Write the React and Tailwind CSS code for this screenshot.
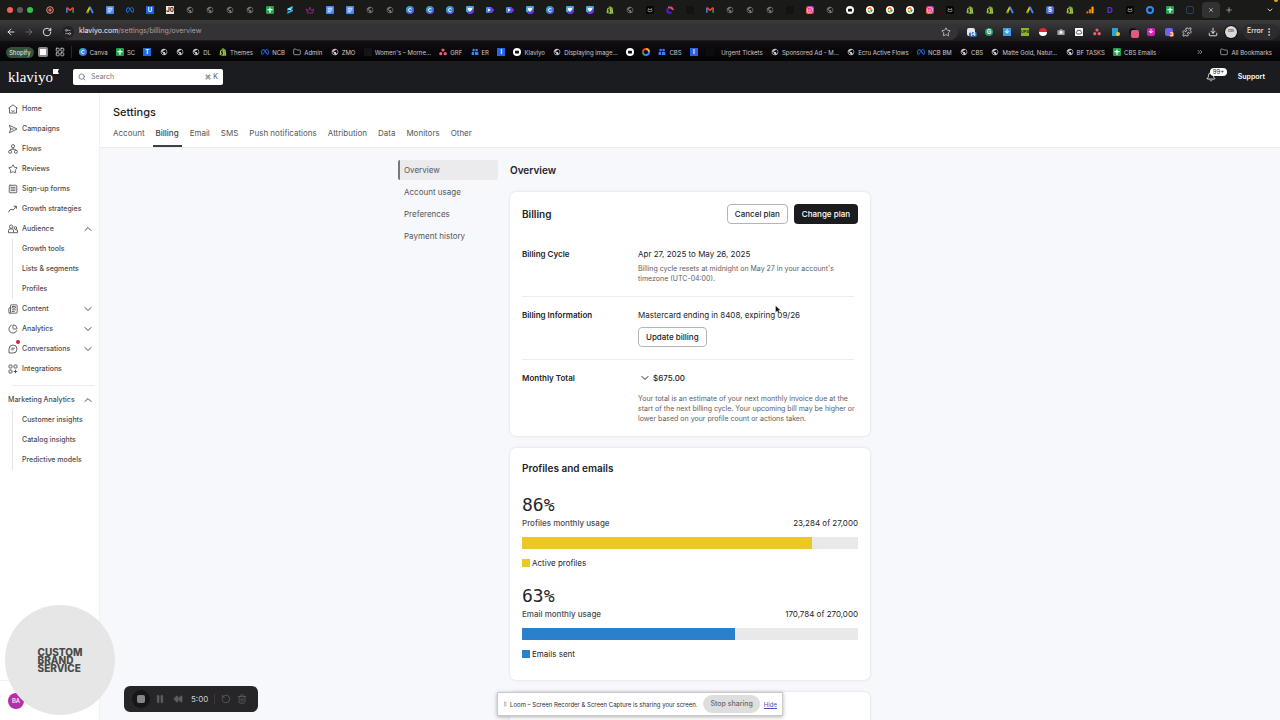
import {
  ArrowLeft,
  ArrowRight,
  Bell,
  ChartPie,
  ChevronDown,
  ChevronsRight,
  ChevronUp,
  Command,
  Download,
  EllipsisVertical,
  Folder,
  GripVertical,
  LayoutGrid,
  Newspaper,
  Pause,
  Plus,
  Puzzle,
  Rewind,
  RotateCw,
  Search,
  Settings2,
  SquareMenu,
  Star,
  Trash2,
  X,
} from "lucide-react"
import { FaInstagram, FaMeta, FaShopify } from "react-icons/fa6"
import { FcGoogle } from "react-icons/fc"
import { MdPublic } from "react-icons/md"

const Tile = ({ className, children }) => (
  <span className={`flex size-2 items-center justify-center text-[6px] leading-none font-bold text-white ${className}`}>
    {children}
  </span>
)

const Sheet = () => (
  <svg viewBox="0 0 8 8" className="size-2">
    <rect width="8" height="8" rx="1" fill="#1fa34a" />
    <path d="M4 1.4v5.4M1.4 3.6h5.2" stroke="#fff" strokeWidth="1.3" />
  </svg>
)

const Doc = () => (
  <svg viewBox="0 0 8 8" className="size-2">
    <rect width="8" height="8" rx="0.8" fill="#4a86f0" />
    <path d="M1.6 2.2h4.8M1.6 4h4.8M1.6 5.8h3.2" stroke="#fff" strokeWidth="0.9" />
  </svg>
)

const Gmail = () => (
  <svg viewBox="0 0 8 8" className="size-2">
    <path d="M0.9 6.8V1.8" stroke="#4285f4" strokeWidth="1.5" />
    <path d="M7.1 6.8V1.8" stroke="#34a853" strokeWidth="1.5" />
    <path d="M0.8 1.6L4 4.2l3.2-2.6" stroke="#ea4335" strokeWidth="1.6" fill="none" />
  </svg>
)

const Ads = () => (
  <svg viewBox="0 0 8 8" className="size-2" strokeLinecap="round" strokeWidth="2">
    <path d="M3.6 1.6L1.4 6" stroke="#fbbc04" />
    <path d="M4.2 1.6L6.6 6.4" stroke="#4285f4" />
    <circle cx="1.5" cy="6.4" r="1.1" fill="#34a853" />
  </svg>
)

const Canva = () => (
  <svg viewBox="0 0 8 8" className="size-2">
    <defs>
      <linearGradient id="canva" x1="0" y1="0" x2="1" y2="1">
        <stop offset="0" stopColor="#19c8d2" />
        <stop offset="1" stopColor="#6a3be8" />
      </linearGradient>
    </defs>
    <circle cx="4" cy="4" r="4" fill="url(#canva)" />
    <path d="M5.5 3a1.7 1.7 0 1 0 0 2.2" fill="none" stroke="#fff" strokeWidth="0.9" />
  </svg>
)

const Heart = () => (
  <svg viewBox="0 0 8 8" className="size-2">
    <path d="M0 1.2Q0 0 1.2 0h5.6Q8 0 8 1.2v4L5.6 8H3L0 5.4z" fill="#3fa9ea" />
    <path d="M8 2.4v3L5.6 8H3L1.4 6.6z" fill="#6a2fe0" />
    <path d="M4 6L1.9 3.7a1.2 1.2 0 0 1 2.1-1.3 1.2 1.2 0 0 1 2.1 1.3z" fill="#fff" />
  </svg>
)

const Play = () => (
  <svg viewBox="0 0 8 8" className="size-2">
    <path d="M0 1.8Q0 1 1 1h4l3 3-2.4 3H1Q0 7 0 6z" fill="#3c8be8" />
    <path d="M5 1l3 3-2.4 3H3z" fill="#6d35e6" />
    <path d="M2 2.4v3.2L5 4z" fill="#fff" />
  </svg>
)

const People = () => (
  <svg viewBox="0 0 8 8" className="size-2" fill="#3b82f6">
    <circle cx="2.6" cy="2" r="1.3" />
    <circle cx="5.6" cy="2" r="1.3" />
    <path d="M0.6 7V5q0-1.2 1.2-1.2h1.4V7zM4 7V3.8h2.2q1.2 0 1.2 1.2v2z" />
  </svg>
)

const Dots = () => (
  <svg viewBox="0 0 8 8" className="size-2" fill="#f0626b">
    <circle cx="4" cy="2" r="1.6" />
    <circle cx="1.8" cy="5.7" r="1.6" />
    <circle cx="6.2" cy="5.7" r="1.6" />
  </svg>
)

const Badge = () => (
  <svg viewBox="0 0 8 8" className="size-2">
    <circle cx="4" cy="4" r="4" fill="#fff" />
    <rect x="2" y="2.8" width="4" height="2.6" rx="0.5" fill="#111" />
  </svg>
)

const Owl = () => (
  <svg viewBox="0 0 8 8" className="size-2">
    <rect width="8" height="8" rx="1.5" fill="#050505" />
    <path d="M1.8 2.4l1.4 0.8M6.2 2.4l-1.4 0.8" stroke="#d8d8d8" strokeWidth="0.6" />
    <path d="M4 4a1.1 1.1 0 1 0 0 1 1.1 1.1 0 1 0 0-1z" fill="none" stroke="#d8d8d8" strokeWidth="0.6" />
  </svg>
)

const Bolt = () => (
  <svg viewBox="0 0 8 8" className="size-2">
    <path d="M6.6 0L1.4 2.8v2L6.6 2.6z" fill="#3ddcf5" />
    <path d="M1.4 2.8L6.6 5.2v-1L3.4 2.6z" fill="#e8fbff" />
    <path d="M1.4 8L6.6 5.2V3.6L1.4 5.8z" fill="#25b6e8" />
  </svg>
)

const Crown = () => (
  <svg viewBox="0 0 8 8" className="size-2" fill="none" stroke="#a0308c" strokeWidth="0.8">
    <path d="M1.4 7h5.2L7.6 3 5.4 4.6 4 1.2 2.6 4.6 0.4 3z" />
  </svg>
)

const Record = () => (
  <svg viewBox="0 0 8 8" className="size-2">
    <circle cx="4" cy="4" r="3.3" fill="none" stroke="#e58b80" />
    <circle cx="4" cy="4" r="1.7" fill="#e8604f" />
  </svg>
)

const Duo = () => (
  <svg viewBox="0 0 8 8" className="size-2" fill="none" strokeWidth="2">
    <path d="M2 1.4h2.4a2.6 2.6 0 0 1 2.4 2.8" stroke="#f2456d" />
    <path d="M1.4 2.6v2.2A2 2 0 0 0 3.4 6.8H5.6" stroke="#4a1fe0" />
  </svg>
)

const Bars = () => (
  <svg viewBox="0 0 8 8" className="size-2">
    <rect x="5.4" y="0.5" width="2.2" height="7" rx="1" fill="#f9ab00" />
    <rect x="2.8" y="3" width="2.2" height="4.5" rx="1" fill="#e8710a" />
    <circle cx="1.3" cy="6.4" r="1.1" fill="#e8710a" />
  </svg>
)

const Ring = () => (
  <svg viewBox="0 0 8 8" className="size-2" fill="none" strokeWidth="1.8">
    <path d="M1 4a3 3 0 0 1 3-3" stroke="#ea4335" />
    <path d="M4 1a3 3 0 0 1 3 3" stroke="#fbbc04" />
    <path d="M7 4a3 3 0 0 1-3 3" stroke="#4285f4" />
    <path d="M4 7a3 3 0 0 1-3-3" stroke="#34a853" />
  </svg>
)

const favicons = {
  globe: <MdPublic className="size-2 text-[#77777a]" />,
  record: <Record />,
  gmail: <Gmail />,
  ads: <Ads />,
  doc: <Doc />,
  sheet: <Sheet />,
  meta: <FaMeta className="size-2 text-[#1877f2]" />,
  v: <Tile className="bg-[#1c62dc]">U</Tile>,
  qr: <Tile className="bg-[#e8e8e8] text-[#222]!">J0</Tile>,
  bolt: <Bolt />,
  crown: <Crown />,
  canva: <Canva />,
  heart: <Heart />,
  play: <Play />,
  shop: <FaShopify className="size-2 text-[#9bc34b]" />,
  owl: <Owl />,
  duo: <Duo />,
  faint: <Tile className="bg-[#131313]" />,
  insta: (
    <Tile className="rounded-xs bg-linear-to-tr from-[#ff8a2a] via-[#f5237c] to-[#a12be0]">
      <FaInstagram className="size-1.5" />
    </Tile>
  ),
  badge: <Badge />,
  google: (
    <Tile className="rounded-full bg-white">
      <FcGoogle className="size-1.5" />
    </Tile>
  ),
  s: <Tile className="rounded-xs bg-[#5468d4]">S</Tile>,
  bars: <Bars />,
  d: <Tile className="text-[8px] text-[#5a35e0]!">D</Tile>,
  blue: <span className="size-2 rounded-full border-2 border-[#2b8cf5]" />,
  code: <Tile className="rounded-xs border border-[#2b3f58] bg-[#1a1a22]" />,
}

const tabs =
  "record gmail ads doc meta v qr globe globe globe globe sheet bolt crown doc doc globe globe canva canva canva heart play play heart canva heart heart shop globe owl duo faint gmail globe globe globe faint insta globe badge google google google insta owl shop shop ads ads s shop bars d owl blue sheet code".split(
    " "
  )

const bookmarks = [
  { icon: <Canva />, label: "Canva" },
  { icon: <Sheet />, label: "SC" },
  { icon: <Tile className="bg-[#1c6be8]">T</Tile>, name: "Trello" },
  { icon: <MdPublic className="size-2" />, name: "Site" },
  { icon: <MdPublic className="size-2" />, name: "Site" },
  { icon: <MdPublic className="size-2" />, label: "DL" },
  { icon: <FaShopify className="size-2 text-[#9bc34b]" />, label: "Themes" },
  { icon: <FaMeta className="size-2 text-[#1877f2]" />, label: "NCB" },
  { icon: <Folder className="size-2" />, label: "Admin" },
  { icon: <MdPublic className="size-2" />, label: "ZMO" },
  { icon: <Tile className="bg-[#141414]" />, label: "Women's – Morne…" },
  { icon: <Dots />, label: "GRF" },
  { icon: <People />, label: "ER" },
  { icon: <Tile className="bg-[#2563eb]">I</Tile>, name: "Intercom" },
  { icon: <Badge />, label: "Klaviyo" },
  { icon: <MdPublic className="size-2" />, label: "Displaying image…" },
  { icon: <Badge />, name: "Klaviyo login" },
  { icon: <Ring />, name: "Workspace" },
  { icon: <People />, label: "CBS" },
  { icon: <Tile className="bg-[#2563eb]">I</Tile>, name: "Intercom" },
  { icon: <Tile className="mr-1 bg-[#0c0c0c]" />, label: "Urgent Tickets" },
  { icon: <MdPublic className="size-2" />, label: "Sponsored Ad - M…" },
  { icon: <MdPublic className="size-2" />, label: "Ecru Active Flows" },
  { icon: <FaMeta className="size-2 text-[#1877f2]" />, label: "NCB BM" },
  { icon: <MdPublic className="size-2" />, label: "CBS" },
  { icon: <MdPublic className="size-2" />, label: "Matte Gold, Natur…" },
  { icon: <MdPublic className="size-2" />, label: "BF TASKS" },
  { icon: <Sheet />, label: "CBS Emails" },
]

const extensions = [
  <span className="relative size-2 rounded-xs bg-[#e6e6ea]">
    <span className="absolute top-1 left-0.5 rounded-xs bg-[#2c5fb4] px-px text-[5px] leading-none font-bold text-white">14</span>
  </span>,
  <Tile className="rounded-full bg-[#1d9d74]">G</Tile>,
  <Tile className="bg-[#3d9cf0]">↓</Tile>,
  <Tile className="bg-[#8db52c] text-[4px]! text-[#27350a]!">UPS</Tile>,
  <span className="size-2 rounded-full bg-linear-to-b from-[#e3262f] from-50% to-white to-50%" />,
  <svg viewBox="0 0 8 8" className="size-2">
    <path d="M0.4 2.2h1.8L3 1.2h2l0.8 1h1.800v4.800H0.400z" fill="#a4a4a8" />
    <circle cx="4" cy="4.400" r="1.300" fill="#fff" />
  </svg>,
  <svg viewBox="0 0 8 8" className="size-2">
    <rect width="8" height="8" rx="0.600" fill="#fff" />
    <path d="M2.600 2.400h2.800L6.800 4.800 5.800 6H2.200L1.200 4.800z" fill="none" stroke="#111" strokeWidth="0.700" />
  </svg>,
  <Dots />,
  <span className="relative h-2 w-1.5 bg-[#25a5d6]">
    <span className="absolute top-1 left-1 size-1 rounded-full bg-[#f2c230]" />
  </span>,
  <span className="relative size-2 rounded-full bg-[#111]">
    <span className="absolute top-0.5 left-0.5 size-2 rounded-xs bg-[#e05a82]" />
  </span>,
  <Tile className="rounded-xs bg-[#d61fb4]">↓</Tile>,
  <span className="relative size-2 rounded-xs bg-[#6d62f2]">
    <span className="absolute top-1 left-1 rounded-xs bg-[#f0562b] px-px text-[5px] leading-none font-bold text-white">3</span>
  </span>,
  <Puzzle className="size-2.5 text-[#e8e8ea]" />,
]

const BrowserChrome = () => (
  <div className="flex-none bg-black text-[#c9c9cd]">
    <div className="flex h-5 items-center bg-[#1a1a19]">
      <div className="flex w-10 flex-none gap-1 pl-[7px]">
        <span className="size-1.5 rounded-full bg-[#f0605a]" />
        <span className="size-1.5 rounded-full bg-[#5b5b5b]" />
        <span className="size-1.5 rounded-full bg-[#35c14b]" />
      </div>
      {tabs.map((name, i) => (
        <span key={i} className="flex w-5 flex-none justify-center">
          {favicons[name]}
        </span>
      ))}
      <button aria-label="Close tab" className="ml-0.5 flex h-4 w-[18px] flex-none items-center justify-center rounded-sm bg-[#323233]">
        <X className="size-1.5" strokeWidth={3} />
      </button>
      <button aria-label="New tab" className="ml-[5px] flex-none">
        <Plus className="size-2" />
      </button>
      <button aria-label="Search tabs" className="relative mr-1.5 ml-auto flex-none">
        <ChevronDown className="size-2" strokeWidth={3} />
        <span className="absolute -top-2 left-2 size-1 rounded-full bg-[#f0a020]" />
      </button>
    </div>

    <div className="flex h-[21px] items-center bg-linear-to-b from-[#3c3c3e] to-[#1b1a1c] pt-0.5">
      <div className="flex w-[62px] flex-none items-center gap-2 pl-1.5">
        <button aria-label="Back">
          <ArrowLeft className="size-2.5 text-white" />
        </button>
        <button aria-label="Forward">
          <ArrowRight className="size-2.5 text-[#77777a]" />
        </button>
        <button aria-label="Reload">
          <RotateCw className="size-2.5 text-white" />
        </button>
      </div>
      <div className="mr-1 flex h-4 flex-1 items-center rounded-full bg-[#353236] pr-[7px]">
        <span className="flex size-3 items-center justify-center rounded-full bg-[#222124]">
          <Settings2 className="size-2" />
        </span>
        <span className="ml-[5px] flex-1 text-[7px] text-[#a2a0a4]">
          <span className="text-[#f0f0f2]">klaviyo.com</span>/settings/billing/overview
        </span>
        <button aria-label="Bookmark this page">
          <Star className="size-2.5" />
        </button>
      </div>
      <div className="flex flex-none items-center">
        {extensions.map((icon, i) => (
          <span key={i} className="flex w-[18px] justify-center">
            {icon}
          </span>
        ))}
      </div>
      <div className="flex w-[84px] flex-none items-center pl-3">
        <Download className="size-2.5 text-white" />
        <span className="ml-[7px] flex size-3 items-center justify-center rounded-full bg-[#d9d9dc] text-[3px] font-bold text-[#555] ring-1 ring-[#111]">
          CBS
        </span>
        <button className="ml-1.5 flex h-4 items-center rounded-full bg-[#2c2b2e] px-1 text-[7px] font-medium text-[#e6e6e8]">
          Error
          <EllipsisVertical className="size-2.5" />
        </button>
      </div>
    </div>

    <nav className="flex h-5 items-center bg-linear-to-b from-[#120e13] to-[#030304] pt-0.5 pr-2 pl-1.5 text-[6px] whitespace-nowrap">
      <span className="rounded-full bg-[#33503c] px-[3px] py-px text-[#e6efe8]">Shopify</span>
      <span className="ml-1 flex size-2.5 items-center justify-center rounded-xs bg-[#8d8d90]">
        <span className="size-1.5 bg-white" />
      </span>
      <LayoutGrid className="ml-[7px] size-2.5" />
      <span className="ml-1.5 h-3 w-px bg-[#2a2a2d]" />
      <div className="ml-[7px] flex flex-1 justify-between">
        {bookmarks.map(({ icon, label, name }, i) => (
          <a key={i} href="#" aria-label={label ?? name} className="flex items-center gap-[3px]">
            {icon}
            {label}
          </a>
        ))}
      </div>
      <ChevronsRight className="ml-10 size-2" />
      <a href="#" className="ml-4 flex items-center gap-[3px]">
        <Folder className="size-2" />
        All Bookmarks
      </a>
    </nav>
  </div>
)

const TopBar = () => (
  <header className="flex h-8 flex-none items-center bg-[#1b1c1f] px-2 text-white">
    <a href="#" aria-label="klaviyo" className="flex w-[65px] flex-none">
      <span className="font-['Liberation_Serif',serif] text-[15px] leading-4">klaviyo</span>
      <svg viewBox="0 0 6 5" className="h-[5px] w-1.5">
        <path d="M0 0h6L4.8 2.5 6 5H0z" fill="#fff" />
      </svg>
    </a>
    <label className="flex h-4 w-[150px] items-center rounded-xs bg-white px-[5px] text-[#55565a]">
      <Search className="size-2" />
      <input
        type="text"
        aria-label="Search"
        placeholder="Search"
        className="ml-[5px] w-full min-w-0 flex-1 text-[7px] outline-none placeholder:text-[#77787c]"
      />
      <Command className="size-1.5" />
      <span className="ml-0.5 text-[7px]">K</span>
    </label>
    <button aria-label="Notifications" className="relative mr-[22px] ml-auto">
      <Bell className="size-2.5" />
      <span className="absolute -top-1 left-1 rounded-full bg-white px-[3px] text-[6px] leading-[8px] text-[#222]">99+</span>
    </button>
    <a href="#" className="pr-[7px] text-[7px] font-semibold">
      Support
    </a>
  </header>
)

const HomeIcon = () => (
  <svg viewBox="0 0 20 20" className="size-2.5" fill="none" stroke="currentColor" strokeWidth="1.7">
    <path d="M1 8.4L10 1.6l9 6.8M3 7.4V18h14V7.4M6.6 13.4q3.4 2.8 6.8 0" />
  </svg>
)

const CampaignsIcon = () => (
  <svg viewBox="0 0 20 20" className="size-2.5" fill="none" stroke="currentColor" strokeWidth="1.7" strokeLinejoin="round">
    <path d="M2.6 2.4L18 10 2.6 17.6 5.4 10zM5.4 10h6" />
  </svg>
)

const FlowsIcon = () => (
  <svg viewBox="0 0 20 20" className="size-2.5" fill="none" stroke="currentColor" strokeWidth="1.7">
    <circle cx="10" cy="4.4" r="3.2" />
    <circle cx="4.2" cy="15.6" r="3" />
    <circle cx="15.8" cy="15.6" r="3" />
    <path d="M10 7.6v3M4.2 12.6q0-2 2-2h7.6q2 0 2 2" />
  </svg>
)

const GrowthIcon = () => (
  <svg viewBox="0 0 20 20" className="size-2.5" fill="none" stroke="currentColor" strokeWidth="1.8">
    <path d="M1 16.6q2.4-5.8 5-5.8t4 1.2Q12.6 11 16 4.6M11.2 4.4h5.6v5" />
  </svg>
)

const AudienceIcon = () => (
  <svg viewBox="0 0 20 20" className="size-2.5" fill="none" stroke="currentColor" strokeWidth="1.7">
    <circle cx="6.4" cy="5.4" r="3.4" />
    <path d="M1 17.4V13q0-3 3-3h4.4q2 0 2.6 2v5.4zM11.4 17.4h7.6V14q0-2.6-2.6-2.6h-2" />
    <circle cx="14.8" cy="8" r="2.6" />
  </svg>
)

const ChatIcon = () => (
  <span className="relative">
    <svg viewBox="0 0 20 20" className="size-2.5" fill="none" stroke="currentColor" strokeWidth="1.7">
      <path d="M2 18V10a8 8 0 1 1 8 8zM6.6 8.4h7M6.6 11.6h4.6" />
    </svg>
    <span className="absolute -top-1 left-2 size-1 rounded-full bg-[#d3222f]" />
  </span>
)

const IntegrationsIcon = () => (
  <svg viewBox="0 0 20 20" className="size-2.5" fill="none" stroke="currentColor" strokeWidth="1.8">
    <rect x="2" y="2" width="6" height="6" rx="1.4" />
    <rect x="12" y="2" width="6" height="6" rx="1.4" />
    <rect x="2" y="12" width="6" height="6" rx="1.4" />
    <path d="M15 11.4v7M11.4 15h7" />
  </svg>
)

const menu = [
  { icon: <HomeIcon />, label: "Home" },
  { icon: <CampaignsIcon />, label: "Campaigns" },
  { icon: <FlowsIcon />, label: "Flows" },
  { icon: <Star className="size-2.5" />, label: "Reviews" },
  { icon: <SquareMenu className="size-2.5" />, label: "Sign-up forms" },
  { icon: <GrowthIcon />, label: "Growth strategies" },
  { icon: <AudienceIcon />, label: "Audience", childs: ["Growth tools", "Lists & segments", "Profiles"] },
  { icon: <Newspaper className="size-2.5" />, label: "Content", childs: [] },
  { icon: <ChartPie className="size-2.5" />, label: "Analytics", childs: [] },
  { icon: <ChatIcon />, label: "Conversations", childs: [] },
  { icon: <IntegrationsIcon />, label: "Integrations" },
]

const MenuItem = ({ icon, label, childs }) => {
  const Chevron = childs?.length ? ChevronUp : ChevronDown
  return (
    <li>
      <a href="#" className="flex h-5 items-center gap-1 pr-[5px] pl-2">
        {icon}
        <span className="flex-1">{label}</span>
        {childs && <Chevron className="size-3" />}
      </a>
      {childs?.length > 0 && (
        <ul className="ml-3 border-l border-[#e4e4e8]">
          {childs.map((child) => (
            <li key={child}>
              <a href="#" className="flex h-5 items-center pl-[9px]">
                {child}
              </a>
            </li>
          ))}
        </ul>
      )}
    </li>
  )
}

const Sidebar = () => (
  <aside className="flex w-[100px] flex-none flex-col border-r border-[#f1f1f4] bg-white text-[7px] font-medium whitespace-nowrap text-[#4b4c50]">
    <ul className="pt-1.5">
      {menu.map((item) => (
        <MenuItem key={item.label} {...item} />
      ))}
    </ul>
    <hr className="mt-1.5 mr-1 ml-3 border-[#ededf0]" />
    <ul className="pt-1">
      <MenuItem label="Marketing Analytics" childs={["Customer insights", "Catalog insights", "Predictive models"]} />
    </ul>
    <div className="mt-auto flex h-10 items-center border-t border-[#f1f1f4] pl-2">
      <span className="flex size-4 items-center justify-center rounded-full bg-[#b52fa6] text-[6px] text-white">BA</span>
    </div>
  </aside>
)

const settingsTabs = ["Account", "Billing", "Email", "SMS", "Push notifications", "Attribution", "Data", "Monitors", "Other"]

const SettingsHeader = () => (
  <div className="flex-none border-b border-[#ececf0] bg-white px-2.5 pt-3">
    <h1 className="px-[3px] text-[11px] leading-[14px] font-medium text-[#1b1c1f]">Settings</h1>
    <nav className="flex gap-[5px] pt-1 text-[8px] text-[#55565a]">
      {settingsTabs.map((tab) => (
        <a
          key={tab}
          href="#"
          className={
            tab === "Billing"
              ? "border-b-2 border-[#3f4044] px-[3px] pt-1 pb-1.5 leading-3 font-medium text-[#3f4044]"
              : "border-b-2 border-transparent px-[3px] pt-1 pb-1.5 leading-3"
          }
        >
          {tab}
        </a>
      ))}
    </nav>
  </div>
)

const Card = ({ children }) => (
  <section className="rounded-md bg-white px-3 pt-3 shadow-[0_0_3px_rgba(30,30,60,0.14)]">{children}</section>
)

const Row = ({ label, children }) => (
  <div className="flex py-3">
    <h3 className="w-[116px] flex-none text-[8px] leading-3 font-semibold">{label}</h3>
    <div className="flex-1">{children}</div>
  </div>
)

const Usage = ({ title, used, total, legend, color }) => (
  <div>
    <p className="font-['DejaVu_Sans_Mono',monospace] text-[18px] leading-[18px]">{Math.round((used / total) * 100)}%</p>
    <div className="mt-1 flex justify-between text-[8px] leading-[10px]">
      <span className="font-medium text-[#4a4b50]">{title}</span>
      <span>
        {used.toLocaleString("en-US")} of {total.toLocaleString("en-US")}
      </span>
    </div>
    <div className="mt-[9px] h-3 bg-[#e9e8ea]">
      <div className={`h-full ${color}`} style={{ width: `${(used / total) * 100}%` }} />
    </div>
    <p className="mt-2 flex items-center gap-0.5 text-[8px] leading-3">
      <span className={`size-2 ${color}`} />
      {legend}
    </p>
  </div>
)

const secondaryButton = "h-5 rounded-sm border border-[#b4b5ba] bg-white px-[7px] text-[8px] font-medium"

const Billing = () => (
  <div className="grid flex-1 grid-cols-[1fr_360px_1fr] overflow-hidden bg-[#f7f8fc] pt-3">
    <ul className="mr-3 w-[100px] space-y-0.5 justify-self-end text-[8px] text-[#55565a]">
      {["Overview", "Account usage", "Preferences", "Payment history"].map((item) => (
        <li key={item}>
          <a
            href="#"
            className={
              item === "Overview"
                ? "flex h-5 items-center rounded-xs border-l-2 border-[#77787c] bg-[#ebebed] pl-1"
                : "flex h-5 items-center border-l-2 border-transparent pl-1"
            }
          >
            {item}
          </a>
        </li>
      ))}
    </ul>

    <div className="text-[#232427]">
      <h2 className="text-[10px] leading-5 font-semibold">Overview</h2>
      <div className="mt-3 space-y-3">
        <Card>
          <div className="mb-3 flex items-center">
            <h2 className="flex-1 text-[10px] font-semibold">Billing</h2>
            <button className={secondaryButton}>Cancel plan</button>
            <button className="ml-1.5 h-5 rounded-sm bg-[#1b1c1f] px-2 text-[8px] font-medium text-white">Change plan</button>
          </div>
          <Row label="Billing Cycle">
            <p className="text-[8px] leading-3">Apr 27, 2025 to May 26, 2025</p>
            <p className="mt-1 text-[7px] leading-[10px] text-[#5d5e63]">
              Billing cycle resets at midnight on May 27 in your account's timezone (UTC-04:00).
            </p>
          </Row>
          <hr className="mr-1 border-[#ececf0]" />
          <Row label="Billing Information">
            <p className="text-[8px] leading-3">Mastercard ending in 8408, expiring 09/26</p>
            <button className={`mt-1.5 block ${secondaryButton}`}>Update billing</button>
          </Row>
          <hr className="mr-1 border-[#ececf0]" />
          <Row label="Monthly Total">
            <button className="flex items-center text-[8px] leading-3 font-medium">
              <ChevronDown className="mx-px size-3" />
              <span className="ml-px">$675.00</span>
            </button>
            <p className="mt-2.5 text-[7px] leading-[10px] text-[#5d5e63]">
              Your total is an estimate of your next monthly invoice due at the start of the next billing cycle. Your upcoming bill
              may be higher or lower based on your profile count or actions taken.
            </p>
          </Row>
        </Card>

        <Card>
          <h2 className="text-[10px] leading-4 font-semibold">Profiles and emails</h2>
          <div className="space-y-[18px] pt-5 pb-5">
            <Usage title="Profiles monthly usage" used={23284} total={27000} legend="Active profiles" color="bg-[#ecc728]" />
            <Usage title="Email monthly usage" used={170784} total={270000} legend="Emails sent" color="bg-[#2b80cc]" />
          </div>
        </Card>

        <Card>
          <div className="h-20" />
        </Card>
      </div>
    </div>
  </div>
)

const CameraBubble = () => (
  <div className="absolute bottom-[5px] left-[5px] flex size-[110px] items-center justify-center rounded-full bg-[#e6e6e6]">
    <p className="text-[10px] leading-[8px] font-extrabold text-[#4a4a4a]">
      CUSTOM
      <br />
      BRAND
      <br />
      SERVICE
    </p>
  </div>
)

const Recorder = () => (
  <div className="absolute bottom-2 left-[124px] flex h-[26px] w-[134px] items-center rounded-md bg-[#262527] px-2 text-[#5d5c60]">
    <button aria-label="Stop" className="flex size-[18px] items-center justify-center rounded-full bg-[#161517]">
      <span className="size-2 rounded-xs bg-[#858488]" />
    </button>
    <button aria-label="Pause" className="ml-[5px]">
      <Pause className="size-2.5 fill-current" strokeWidth={1} />
    </button>
    <button aria-label="Rewind" className="ml-2">
      <Rewind className="size-2.5 fill-current" strokeWidth={1} />
    </button>
    <span className="ml-2 text-[8px] text-[#cfced2]">5:00</span>
    <span className="ml-1.5 h-2.5 w-px bg-[#3b3a3d]" />
    <button aria-label="Restart" className="ml-1.5">
      <RotateCw className="size-2.5 -scale-x-100" />
    </button>
    <button aria-label="Delete" className="ml-1.5">
      <Trash2 className="size-2.5" />
    </button>
  </div>
)

const SharingBar = () => (
  <div className="absolute bottom-1 left-1/2 flex h-6 -translate-x-1/2 items-center border border-[#c9c9ce] bg-white px-1 text-[6px] whitespace-nowrap text-[#2c2d30] shadow-[0_1px_4px_rgba(0,0,0,0.3)]">
    <GripVertical className="size-1.5 text-[#9a9a9e]" />
    <span className="mr-1.5 ml-0.5">Loom – Screen Recorder & Screen Capture is sharing your screen.</span>
    <button className="h-[18px] rounded-full bg-[#dededf] px-[7px] text-[7px] font-medium text-[#6a6a6d]">Stop sharing</button>
    <a href="#" className="mr-px ml-1 text-[#3a55b8] underline">
      Hide
    </a>
  </div>
)

const Cursor = () => (
  <svg viewBox="0 0 8 10" className="absolute top-[305px] left-[775px] h-2.5 w-2">
    <path d="M0.5 0.5v7l1.7-1.5 1.2 2.8 1.3-0.6L3.6 5.5h2.2z" fill="#111" stroke="#fff" strokeWidth="0.4" />
  </svg>
)

export default function App() {
  return (
    <div className="relative flex h-screen flex-col overflow-hidden font-['Inter',sans-serif]">
      <BrowserChrome />
      <TopBar />
      <div className="flex min-h-0 flex-1">
        <Sidebar />
        <main className="flex min-w-0 flex-1 flex-col">
          <SettingsHeader />
          <Billing />
        </main>
      </div>
      <CameraBubble />
      <Recorder />
      <SharingBar />
      <Cursor />
    </div>
  )
}
